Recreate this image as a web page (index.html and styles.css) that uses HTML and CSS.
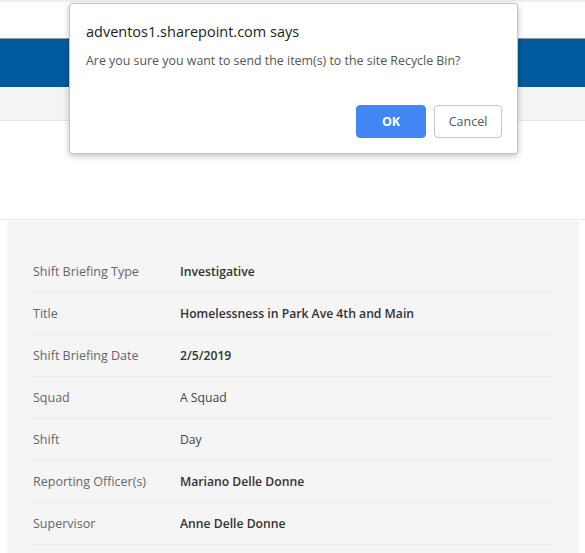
FILE: index.html
```html
<!DOCTYPE html>
<html>
<head>
<meta charset="utf-8">
<link rel="stylesheet" href="styles.css">
</head>
<body>
<div class="topstrip"></div>
<div class="header"></div>
<div class="nav"></div>
<div class="commandbar"></div>
<div class="hero"></div>
<div class="panel">
  <div class="row"><div class="label">Shift Briefing Type</div><div class="value">Investigative</div></div>
  <div class="row"><div class="label">Title</div><div class="value">Homelessness in Park Ave 4th and Main</div></div>
  <div class="row"><div class="label">Shift Briefing Date</div><div class="value">2/5/2019</div></div>
  <div class="row"><div class="label">Squad</div><div class="value light">A Squad</div></div>
  <div class="row"><div class="label">Shift</div><div class="value light">Day</div></div>
  <div class="row"><div class="label">Reporting Officer(s)</div><div class="value">Mariano Delle Donne</div></div>
  <div class="row"><div class="label">Supervisor</div><div class="value">Anne Delle Donne</div></div>
</div>
<div class="dialog">
  <div class="dlg-title">adventos1.sharepoint.com says</div>
  <div class="dlg-msg">Are you sure you want to send the item(s) to the site Recycle Bin?</div>
  <div class="dlg-buttons">
    <button class="btn btn-ok">OK</button>
    <button class="btn btn-cancel">Cancel</button>
  </div>
</div>
</body>
</html>
```
FILE: styles.css
```css
html, body {
  margin: 0;
  padding: 0;
  background: #ffffff;
  font-family: "Open Sans", "Noto Sans", sans-serif;
  overflow: hidden;
}
.topstrip { height: 2px; background: #efefef; }
.header { height: 36px; background: #ffffff; }
.nav {
  height: 48px;
  background: #005a9e;
  border-top: 1px solid #8e9aa6;
}
.commandbar {
  height: 33px;
  background: #f4f4f4;
  border-bottom: 1px solid #e6e6e6;
}
.hero {
  height: 98px;
  background: #ffffff;
  border-bottom: 1px solid #ececec;
}
.panel {
  margin: 1px 6px 0 7px;
  background: #f5f5f5;
  padding: 30px 29px 20px 26px;
}
.row {
  display: flex;
  align-items: center;
  height: 41px;
  border-bottom: 1px solid #e9e9e9;
}
.label {
  width: 147px;
  font-size: 12.5px;
  color: #666666;
}
.value {
  font-size: 12.2px;
  font-weight: 600;
  color: #333333;
}
.value.light {
  font-weight: 500;
  color: #444444;
}
.dialog {
  position: absolute;
  left: 69px;
  top: 3px;
  width: 447px;
  height: 149px;
  background: #ffffff;
  border: 1px solid #c4c4c4;
  border-radius: 3px;
  box-shadow: 0 2px 6px rgba(0, 0, 0, 0.25);
  box-sizing: content-box;
}
.dlg-title {
  margin: 18px 0 0 16px;
  font-size: 14.5px;
  color: #222222;
  line-height: 20px;
}
.dlg-msg {
  margin: 10px 0 0 16px;
  font-size: 12.4px;
  color: #555555;
  line-height: 18px;
}
.dlg-buttons {
  display: flex;
  justify-content: flex-end;
  gap: 8px;
  margin: 35px 15px 0 0;
}
.btn {
  height: 33px;
  border-radius: 4px;
  font-family: "Open Sans", "Noto Sans", sans-serif;
  font-size: 12.5px;
  padding: 0;
  cursor: default;
}
.btn-ok {
  width: 70px;
  background: #4285f4;
  border: 1px solid #4285f4;
  color: #ffffff;
  font-weight: 700;
}
.btn-cancel {
  width: 68px;
  background: #ffffff;
  border: 1px solid #c6c6c6;
  color: #555555;
}
```
